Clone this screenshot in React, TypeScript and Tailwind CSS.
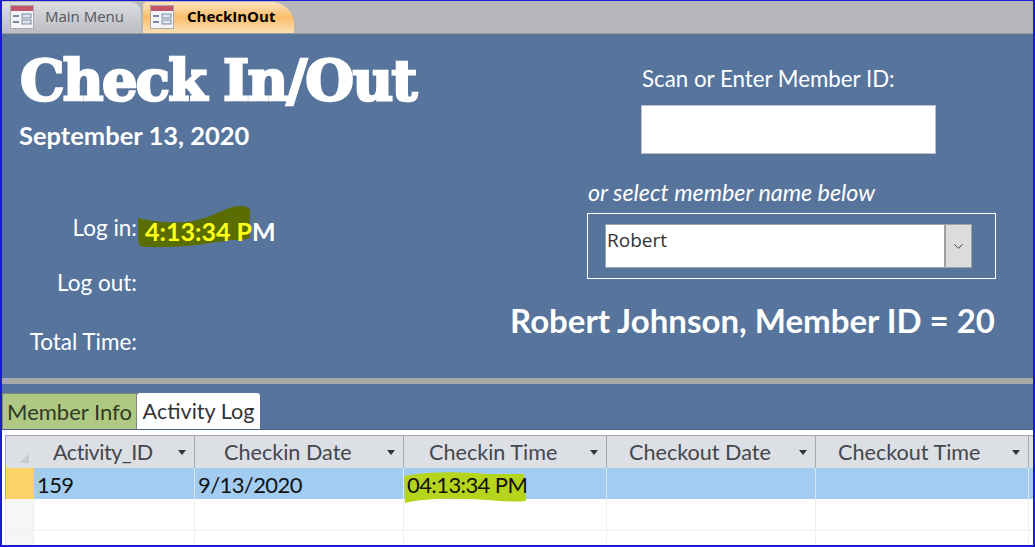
import { ChevronDown } from 'lucide-react'

const columns = [
  { name: 'Activity_ID', w: 'w-[161px]', pad: 'pl-[19px]', label: 'tracking-[-0.5px]', value: '159' },
  { name: 'Checkin Date', w: 'w-[209px]', pad: 'pl-[29px]', label: '', value: '9/13/2020' },
  { name: 'Checkin Time', w: 'w-[203px]', pad: 'pl-[25px]', label: '', value: '04:13:34 PM' },
  { name: 'Checkout Date', w: 'w-[209px]', pad: 'pl-[22px]', label: '', value: '' },
  { name: 'Checkout Time', w: 'w-[213px]', pad: 'pl-[22px]', label: '', value: '' },
]

function FormIcon() {
  return (
    <svg width="24" height="24" viewBox="0 0 24 24" className="shrink-0">
      <rect x="0.5" y="0.5" width="23" height="23" fill="#f4f4f6" stroke="#a9a9b2" />
      <rect x="1" y="1" width="22" height="5" fill="#c4566a" />
      <rect x="3" y="10" width="6" height="2" fill="#7d8aa8" />
      <rect x="3" y="16" width="6" height="2" fill="#7d8aa8" />
      <rect x="12" y="9" width="9" height="4" fill="#dfe3ec" stroke="#7d8aa8" />
      <rect x="12" y="15" width="9" height="4" fill="#dfe3ec" stroke="#7d8aa8" />
    </svg>
  )
}

function SortArrow() {
  return <span className="ml-auto mr-[8px] mt-[1px] border-x-[4px] border-t-[5px] border-x-transparent border-t-[#333]" />
}

export default function App() {
  return (
    <div className="flex h-[547px] w-[1035px] flex-col overflow-hidden border-x-2 border-y border-b-2 border-[#1a1ad0] bg-white font-['Lato',sans-serif]">
      {/* tab strip */}
      <div className="flex h-[33px] shrink-0 items-end border-b border-[#9a9ca0] bg-[#b5b6ba]">
        <div className="flex h-[31px] w-[139px] items-center gap-[11px] rounded-tr-[10px] bg-gradient-to-b from-[#dcdde0] to-[#bcbdc1] pb-[2px] pl-[8px]">
          <FormIcon />
          <span className="font-['Open_Sans',sans-serif] text-[15px] text-[#55585e]">Main Menu</span>
        </div>
        <div className="ml-[2px] flex h-[31px] w-[151px] items-center gap-[13px] rounded-tl-[4px] rounded-tr-[22px] bg-gradient-to-b from-[#fde3bd] via-[#fbbd69] to-[#fde0b4] pb-[2px] pl-[7px]">
          <FormIcon />
          <span className="font-['Open_Sans',sans-serif] text-[15px] font-bold text-black">CheckInOut</span>
        </div>
      </div>

      {/* form header */}
      <div className="flex h-[344px] shrink-0 bg-[#56749c] text-white">
        <div className="w-[585px] shrink-0">
          <div className="ml-[18px] mt-[8px] font-['DejaVu_Serif',serif] text-[56px] font-bold leading-[76px] tracking-[-1.7px] [-webkit-text-stroke:2.5px_white]">
            Check In/Out
          </div>
          <div className="ml-[17px] mt-[2px] text-[25.5px] font-bold leading-[30px]">September 13, 2020</div>
          <div className="mt-[62px] flex h-[32px] items-center">
            <span className="w-[135px] text-right text-[22.5px]">Log in:</span>
            <span className="relative ml-[8px] mt-[6px] text-[25px] font-bold leading-[32px]">
              <svg className="absolute left-[-7px] top-[-10px] h-[44px] w-[116px] overflow-visible" viewBox="0 0 116 44">
                <path d="M0 13 C16 17 36 18 49 17 C62 15 72 11 79 8 C88 4 95 1 102 1 C108 1 112 2 112 7 L112 33 C106 35 98 35 92 35 C74 38 50 42 29 42 L6 42 C2 42 0 39 0 35 Z" fill="#5a6e00" />
              </svg>
              <span className="relative text-[#ffff1a]">4:13:34 P</span>
              <span className="relative">M</span>
            </span>
          </div>
          <div className="mt-[23px] w-[135px] text-right text-[22.5px] leading-[32px]">Log out:</div>
          <div className="mt-[27px] w-[135px] text-right text-[22.5px] leading-[32px]">Total Time:</div>
        </div>
        <div className="flex-1">
          <div className="ml-[55px] mt-[30px] text-[22.3px] leading-[30px]">Scan or Enter Member ID:</div>
          <div className="ml-[54px] mt-[11px] h-[49px] w-[295px] border border-[#b8c0cc] bg-white" />
          <div className="ml-[1px] mt-[23px] text-[23.3px] italic leading-[30px]">or select member name below</div>
          <div className="mt-[6px] flex h-[66px] w-[409px] items-center border border-white pl-[17px]">
            <div className="flex h-[44px] w-[367px] border border-[#9ba3ad] bg-white">
              <span className="flex-1 pl-[1px] pt-[3px] font-['Open_Sans',sans-serif] text-[19px] leading-[24px] text-[#333]">Robert</span>
              <span className="flex w-[27px] items-center justify-center border-l-2 border-[#a0a0a4] bg-[#dcdcdc]">
                <ChevronDown size={15} strokeWidth={1.5} className="text-[#333]" />
              </span>
            </div>
          </div>
          <div className="mt-[21px] flex w-[408px] justify-end whitespace-nowrap text-[33px] font-bold leading-[40px]">Robert Johnson, Member ID = 20</div>
        </div>
      </div>

      <div className="h-[6px] shrink-0 bg-[#a8a8a8]" />

      {/* subform tabs */}
      <div className="flex h-[46px] shrink-0 items-end border-b border-[#4b6282] bg-[#56749c]">
        <div className="flex h-[36px] w-[135px] items-center justify-center border border-b-0 border-[#7d8a73] bg-[#b0c982] text-[22px] text-[#2f3a28]">
          Member Info
        </div>
        <div className="flex h-[36px] w-[123px] items-center justify-center rounded-t-[3px] bg-white text-[21.6px] text-[#333]">
          Activity Log
        </div>
      </div>

      {/* datasheet */}
      <div className="flex-1 bg-white pl-[3px] pt-[5px] font-['Lato',sans-serif]">
        <div className="flex h-[33px] border-l border-t border-[#a5a7ab] bg-[#dcdfe4] text-[21.6px] text-[#44474d]">
          <div className="flex w-[28px] shrink-0 items-end pb-[4px] pl-[12px]">
            <svg width="14" height="14" viewBox="0 0 14 14"><path d="M1 13 L11 4 L11 13 Z" fill="#c8cbd0" /></svg>
          </div>
          {columns.map((c) => (
            <div key={c.name} className={`flex items-center border-r border-[#a5a7ab] ${c.pad} ${c.w}`}>
              <span className={`whitespace-nowrap ${c.label}`}>{c.name}</span>
              <SortArrow />
            </div>
          ))}
        </div>
        <div className="flex h-[31px] border-l border-[#a5a7ab] bg-[#a3cdf0] text-[22px] text-[#111]">
          <div className="w-[28px] shrink-0 bg-[#fdd267]" />
          {columns.map((c) => (
            <div key={c.name} className={`relative border-r border-[#d6e7f6] pl-[3px] leading-[33px] ${c.w}`}>
              {c.value === '04:13:34 PM' && (
                <svg className="absolute left-[-2px] top-[3px] h-[32px] w-[125px]" viewBox="0 0 125 32">
                  <path d="M2 5 C30 0 60 1 85 3 L122 3 L124 30 C105 32 85 28 60 28 C35 27 15 29 3 32 Z" fill="#b5d41c" />
                </svg>
              )}
              <span className="relative tracking-[-0.6px]">{c.value}</span>
            </div>
          ))}
        </div>
        <div className="flex h-[32px] border-b border-[#f0f0f0]">
          <div className="w-[29px] shrink-0 border-x border-[#eceef2] bg-[#f5f6f8]" />
          {columns.map((c) => (
            <div key={c.name} className={`border-r border-[#f0f0f0] ${c.w}`} />
          ))}
        </div>
        <div className="flex h-[14px]">
          <div className="w-[29px] shrink-0 border-x border-[#eceef2] bg-[#f5f6f8]" />
          {columns.map((c) => (
            <div key={c.name} className={`border-r border-[#f0f0f0] ${c.w}`} />
          ))}
        </div>
      </div>
    </div>
  )
}
